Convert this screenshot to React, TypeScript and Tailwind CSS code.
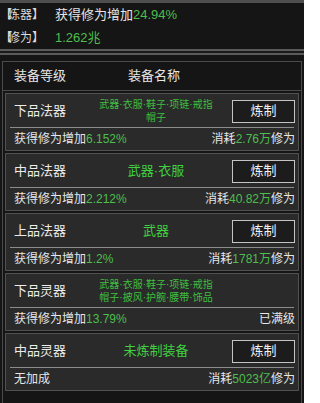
import React from "react";

type Card = {
  level: string;
  cats: string[];
  small: boolean;
  bonus: string | null;
  cost: string | null;
  maxed?: boolean;
  button: boolean;
};

const cards: Card[] = [
  { level: "下品法器", cats: ["武器·衣服·鞋子·项链·戒指", "帽子"], small: true, bonus: "6.152%", cost: "2.76万", button: true },
  { level: "中品法器", cats: ["武器·衣服"], small: false, bonus: "2.212%", cost: "40.82万", button: true },
  { level: "上品法器", cats: ["武器"], small: false, bonus: "1.2%", cost: "1781万", button: true },
  { level: "下品灵器", cats: ["武器·衣服·鞋子·项链·戒指", "帽子·披风·护腕·腰带·饰品"], small: true, bonus: "13.79%", cost: null, maxed: true, button: false },
  { level: "中品灵器", cats: ["未炼制装备"], small: false, bonus: null, cost: "5023亿", button: true },
];

function Label({ text }: { text: string }) {
  return (
    <div className="w-[55px] text-[12px] leading-[16px] text-[#dcdcdc] whitespace-nowrap">
      <span className="tracking-[-4px]">【</span>
      {text}】
    </div>
  );
}

function CardRow({ c }: { c: Card }) {
  return (
    <div className="mx-[2px] mt-[2px] mb-[2px] h-[58px] border border-[#505050] bg-[#2a2a2a] flex flex-col">
      <div className="h-[33px] flex items-center pl-[8px] pr-[3px] pt-[1px]">
        <div className="w-[70px] text-[13px] leading-[16px] text-[#ececec]">{c.level}</div>
        <div className="flex-1 flex flex-col items-center justify-center">
          {c.cats.map((t, i) =>
            c.small ? (
              <div key={i} className="text-[10px] leading-[13px] text-[#3fbf3f]">
                {t}
              </div>
            ) : (
              <div key={i} className="text-[13px] leading-[16px] text-[#40d040]">
                {t}
              </div>
            )
          )}
        </div>
        <div className="w-[63px] ml-[4px]">
          {c.button && (
            <div className="h-[23px] w-[63px] border border-[#c4c4c4] bg-[#1c1c1c] flex items-center justify-center text-[13px] leading-[16px] text-[#f0f0f0]">
              炼制
            </div>
          )}
        </div>
      </div>
      <div className="mx-[4px] h-px bg-[#8c8c8c]" />
      <div className="flex-1 flex items-center justify-between pl-[8px] pr-[3px] pt-[1px] text-[12px] leading-[15px] text-[#e6e6e6]">
        <div>
          {c.bonus ? (
            <>
              获得修为增加<span className="text-[#4dbf4d]">{c.bonus}</span>
            </>
          ) : (
            "无加成"
          )}
        </div>
        <div>
          {c.maxed ? (
            "已满级"
          ) : (
            <>
              消耗<span className="text-[#4dbf4d]">{c.cost}</span>修为
            </>
          )}
        </div>
      </div>
    </div>
  );
}

export default function App() {
  return (
    <div className="w-[304px] h-[403px] overflow-hidden bg-[#151515] font-['Liberation_Sans','Noto_Sans_CJK_SC',sans-serif] text-[#e6e6e6]">
      <div className="h-[3px] bg-[#4e4e4e]" />
      <div className="h-[23px] flex items-center text-[13px] leading-[16px]">
        <Label text="炼器" />
        <div>
          获得修为增加<span className="text-[#4dbf4d]">24.94%</span>
        </div>
      </div>
      <div className="h-[23px] flex items-center text-[13px] leading-[16px]">
        <Label text="修为" />
        <div className="text-[#4dbf4d]">1.262兆</div>
      </div>
      <div className="h-[2px] bg-[#5a5a5a]" />
      <div className="h-[2px] bg-[#1a1a1a]" />
      <div className="h-[2px] bg-[#5a5a5a]" />
      <div className="h-[6px]" />
      <div className="mx-[2px] border border-[#4a4a4a] h-[400px]">
        <div className="h-[29px] flex items-center pl-[11px] border-b border-[#4a4a4a] text-[13px] leading-[16px] text-[#e6e6e6]">
          <div className="w-[114px]">装备等级</div>
          <div>装备名称</div>
        </div>
        {cards.map((c, i) => (
          <CardRow key={i} c={c} />
        ))}
      </div>
    </div>
  );
}
